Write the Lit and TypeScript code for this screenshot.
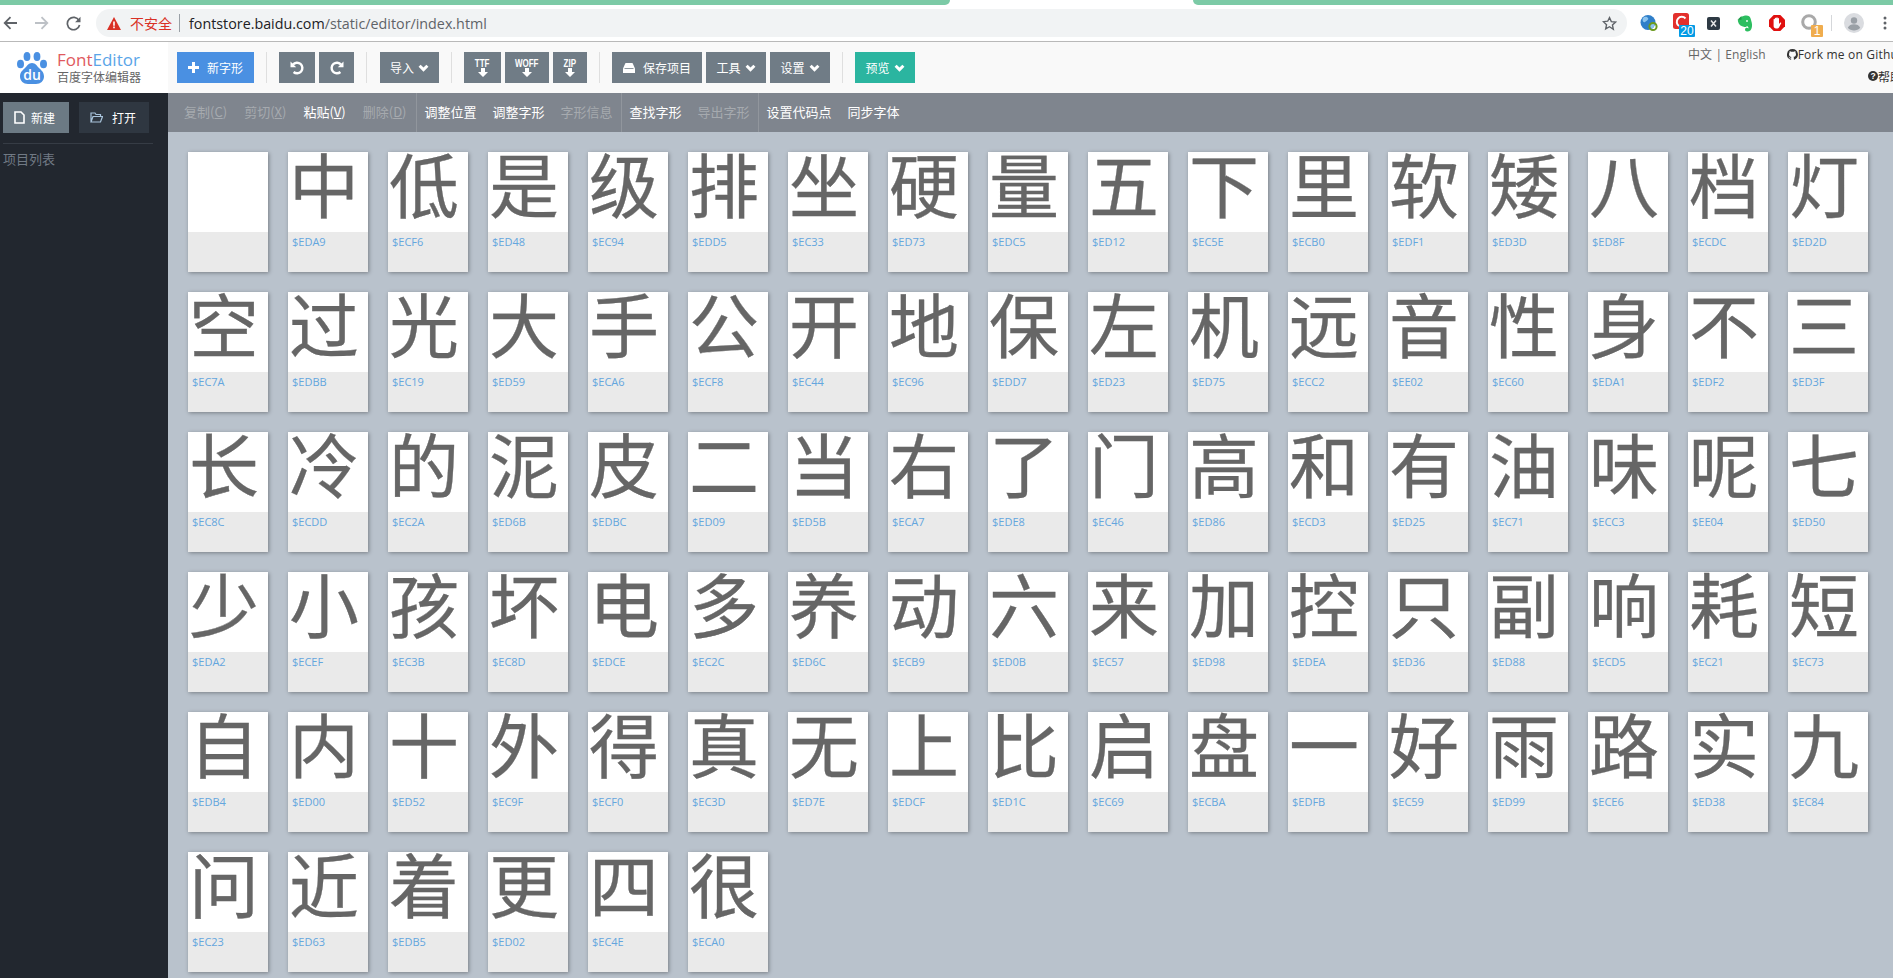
import { LitElement, css, html, svg } from "lit";
import { customElement } from "lit/decorators.js";

const GLYPHS = [
  "中EDA9 低ECF6 是ED48 级EC94 排EDD5 坐EC33 硬ED73 量EDC5 五ED12 下EC5E 里ECB0 软EDF1 矮ED3D 八ED8F 档ECDC 灯ED2D",
  "空EC7A 过EDBB 光EC19 大ED59 手ECA6 公ECF8 开EC44 地EC96 保EDD7 左ED23 机ED75 远ECC2 音EE02 性EC60 身EDA1 不EDF2 三ED3F",
  "长EC8C 冷ECDD 的EC2A 泥ED6B 皮EDBC 二ED09 当ED5B 右ECA7 了EDE8 门EC46 高ED86 和ECD3 有ED25 油EC71 味ECC3 呢EE04 七ED50",
  "少EDA2 小ECEF 孩EC3B 坏EC8D 电EDCE 多EC2C 养ED6C 动ECB9 六ED0B 来EC57 加ED98 控EDEA 只ED36 副ED88 响ECD5 耗EC21 短EC73",
  "自EDB4 内ED00 十ED52 外EC9F 得ECF0 真EC3D 无ED7E 上EDCF 比ED1C 启EC69 盘ECBA 一EDFB 好EC59 雨ED99 路ECE6 实ED38 九EC84",
  "问EC23 近ED63 着EDB5 更ED02 四EC4E 很ECA0",
]
  .join(" ")
  .split(" ")
  .map((s) => ({ ch: s[0], code: "$" + s.slice(1) }));

const chevron = html`<svg class="chev" width="11" height="8" viewBox="0 0 11 8"><path d="M1.6 1.8 5.5 5.6 9.4 1.8" fill="none" stroke="#fff" stroke-width="3"/></svg>`;
const downArrow = html`<svg class="down" width="10" height="9" viewBox="0 0 10 9"><path d="M3 0h4v4h3L5 9 0 4h3z" fill="#fff"/></svg>`;

@customElement("app-root")
export class AppRoot extends LitElement {
  static styles = css`
    :host {
      display: block;
      width: 100%;
      height: 100vh;
      overflow: hidden;
      background: #b9c2cc;
      font-family: "Noto Sans CJK SC", "Open Sans", sans-serif;
      font-size: 12px;
    }

    /* browser chrome */
    .tabs {
      display: flex;
      height: 5px;
      background: #fff;
    }
    .tab-l, .tab-r {
      background: #7ccaa6;
    }
    .tab-l {
      width: 950px;
      border-bottom-right-radius: 5px;
    }
    .tab-r {
      flex: 1;
      margin-left: 243px;
      border-bottom-left-radius: 5px;
    }
    .chrome {
      display: flex;
      align-items: center;
      height: 36px;
      background: #fff;
      border-bottom: 1px solid #b9b9b9;
      box-sizing: content-box;
    }
    .nav {
      display: flex;
      align-items: center;
      width: 96px;
      flex: none;
    }
    .nav svg {
      display: block;
    }
    .pill {
      display: flex;
      align-items: center;
      width: 1531px;
      height: 28px;
      flex: none;
      border-radius: 14px;
      background: #f1f3f4;
      box-sizing: border-box;
      padding-left: 11px;
      font-family: "Open Sans", "Noto Sans CJK SC", sans-serif;
    }
    .unsafe {
      margin-left: 9px;
      color: #d93025;
      font-size: 14px;
      font-family: "Noto Sans CJK SC", sans-serif;
      line-height: 20px;
    }
    .pill-sep {
      width: 1px;
      height: 18px;
      margin: 0 9px 0 7px;
      background: #9aa0a6;
    }
    .url {
      font-size: 14.3px;
      color: #5f6368;
      white-space: nowrap;
    }
    .url b {
      font-weight: 400;
      color: #202124;
    }
    .star {
      margin-left: auto;
      margin-right: 10px;
      display: block;
    }
    .exts {
      display: flex;
      margin-left: 6px;
    }
    .ext {
      position: relative;
      display: flex;
      align-items: center;
      justify-content: center;
      width: 32px;
      height: 36px;
    }
    .badge {
      position: absolute;
      top: 20px;
      height: 12px;
      border-radius: 1px;
      color: #fff;
      font: 12px/12px "Liberation Sans", sans-serif;
      text-align: center;
    }
    .badge.blue {
      left: 14px;
      width: 16px;
      background: #039be5;
    }
    .badge.orange {
      left: 18px;
      width: 12px;
      background: #f0ad4e;
    }
    .chrome-sep {
      width: 1px;
      height: 16px;
      margin: 0 12px 0 6px;
      background: #d5d7da;
    }
    .dots {
      margin-left: 19px;
      display: block;
    }

    /* app header */
    .header {
      display: flex;
      align-items: center;
      height: 51px;
      background: #f9f9f9;
    }
    .logo {
      display: flex;
      align-items: center;
      flex: none;
      width: 168px;
      height: 100%;
      box-sizing: border-box;
      padding-left: 17px;
      background: #fff;
    }
    .logo-text {
      margin-left: 10px;
    }
    .logo-title {
      font: 17px/17px "Open Sans", sans-serif;
      color: #5aa5e8;
    }
    .logo-title span {
      color: #e0595e;
    }
    .logo-sub {
      font-size: 12px;
      line-height: 17px;
      color: #666;
    }
    .bar {
      display: flex;
      align-items: center;
      margin-left: 9px;
    }
    .group {
      display: flex;
      gap: 4px;
    }
    .sep {
      width: 1px;
      height: 31px;
      margin: 0 12px;
      background: #dfdfdf;
    }
    .btn {
      display: flex;
      align-items: center;
      justify-content: center;
      height: 31px;
      padding: 0 11px;
      background: #707c86;
      color: #fff;
      white-space: nowrap;
    }
    .btn.blue {
      background: #4a90e2;
    }
    .btn.teal {
      background: #2bb5a0;
    }
    .btn.menu {
      padding: 0 10.5px;
    }
    .btn.redo {
      padding: 0 10.5px;
    }
    .btn.import {
      margin-left: 1px;
      padding: 0 10px;
    }
    .btn svg {
      display: block;
      flex: none;
    }
    .plus {
      margin-right: 8px;
    }
    .hdd {
      margin-right: 8px;
    }
    .chev {
      margin-left: 4px;
    }
    .dl {
      flex-direction: column;
      padding: 0;
      font: bold 10px/9px "Liberation Sans", sans-serif;
    }
    .dl span {
      display: block;
      transform: scaleX(0.8);
    }
    .w-ttf { width: 37px; }
    .w-woff { width: 44px; }
    .w-zip { width: 34px; }
    .links {
      flex: none;
      width: 205px;
      margin-left: auto;
      align-self: flex-start;
      overflow: hidden;
      white-space: nowrap;
      color: #666;
    }
    .links-top {
      display: flex;
      align-items: center;
      height: 24px;
      font-family: "Open Sans", "Noto Sans CJK SC", sans-serif;
    }
    .lang {
      letter-spacing: 0.1px;
    }
    .lang a {
      color: #666;
    }
    .fork {
      display: flex;
      align-items: center;
      margin-left: 21px;
      color: #333;
      letter-spacing: 0.2px;
    }
    .help {
      display: flex;
      align-items: center;
      height: 20px;
      margin-left: 180px;
      color: #333;
    }
    .help svg, .fork svg {
      display: block;
      flex: none;
    }

    /* workspace */
    .main {
      display: flex;
      height: calc(100vh - 93px);
    }
    .side {
      flex: none;
      width: 168px;
      box-sizing: border-box;
      padding: 9px 15px 0 3px;
      background: #22272f;
    }
    .side-btns {
      display: flex;
      gap: 10px;
      padding-bottom: 10px;
      border-bottom: 1px solid #363c45;
    }
    .side-btn {
      display: flex;
      align-items: center;
      height: 31px;
      box-sizing: border-box;
      color: #fff;
      background: #2f3741;
      width: 70px;
      padding-left: 11px;
    }
    .side-btn svg {
      display: block;
      margin-right: 9px;
    }
    .side-btn.on {
      width: 66px;
      background: #6c7a84;
    }
    .side-btn.on svg {
      margin-right: 6px;
    }
    .side-title {
      margin-top: 5px;
      font-size: 13px;
      line-height: 20px;
      color: #717a85;
    }
    .content {
      flex: 1;
      min-width: 0;
    }
    .tools {
      display: flex;
      height: 39px;
      padding-left: 8px;
      background: #7f858e;
      font-size: 13px;
      line-height: 37px;
      color: #fff;
    }
    .tool {
      padding: 0 8px;
      white-space: nowrap;
    }
    .tool.key {
      padding-right: 9px;
    }
    .tool.off {
      color: #a6aaaf;
    }
    .tool-sep {
      width: 1px;
      background: #91969d;
    }
    .list {
      display: grid;
      grid-template-columns: repeat(17, 80px);
      gap: 20px;
      padding: 20px 0 0 20px;
    }
    .card {
      width: 80px;
      height: 120px;
      background: #eaeaea;
      box-shadow: 1px 1px 4px rgba(0, 0, 0, 0.35);
    }
    .glyph {
      width: 80px;
      height: 80px;
      background: #fff;
      color: #666;
      font-size: 70px;
      line-height: 62px;
      padding-left: 1px;
      box-sizing: border-box;
      -webkit-text-stroke: 0.3px #666;
    }
    .code {
      padding-left: 4px;
      font: 11px/20px "Open Sans", sans-serif;
      color: #64a6de;
    }
  `;

  renderChrome() {
    return html`
      <div class="tabs"><div class="tab-l"></div><div class="tab-r"></div></div>
      <div class="chrome">
        <div class="nav">
          <svg style="margin-left:3px" width="14" height="14" viewBox="0 0 14 14"><path d="M14 7H2M7.5 1.2 1.7 7l5.8 5.8" fill="none" stroke="#5f6368" stroke-width="1.8"/></svg>
          <svg style="margin-left:18px" width="14" height="14" viewBox="0 0 14 14"><path d="M0 7h12M6.5 1.2 12.3 7l-5.8 5.8" fill="none" stroke="#bdc1c6" stroke-width="1.8"/></svg>
          <svg style="margin-left:17px" width="15" height="15" viewBox="0 0 15 15"><path d="M13 4.5A6.2 6.2 0 1 0 13.6 9" fill="none" stroke="#5f6368" stroke-width="1.7"/><path d="M14.5 0.8v5.4H9.1z" fill="#5f6368"/></svg>
        </div>
        <div class="pill">
          <svg width="14" height="13" viewBox="0 0 14 13"><path d="M7 0 14 13H0z" fill="#d93025"/><path d="M6.2 4.5h1.6v4.2H6.2zM6.2 9.6h1.6v1.6H6.2z" fill="#fff"/></svg>
          <span class="unsafe">不安全</span>
          <span class="pill-sep"></span>
          <span class="url"><b>fontstore.baidu.com</b>/static/editor/index.html</span>
          <svg class="star" width="15" height="15" viewBox="0 0 24 24"><path d="M12 2.6l2.9 6.3 6.9.8-5.1 4.7 1.4 6.8L12 17.2l-6.1 3.4 1.4-6.8-5.1-4.7 6.9-.8z" fill="none" stroke="#5f6368" stroke-width="2.2"/></svg>
        </div>
        <div class="exts">
          <div class="ext">
            <svg width="18" height="18" viewBox="0 0 18 18"><circle cx="8" cy="8.5" r="7.5" fill="#2f7fc9"/><path d="M3 4c2-2 4-1 5 0s-1 3-3 4-3-2-2-4zM10 10l3-2 2 3-3 4-2-2z" fill="#8cc4ee"/><circle cx="13" cy="12.5" r="3.6" fill="none" stroke="#6c9a1f" stroke-width="2"/></svg>
          </div>
          <div class="ext">
            <svg style="margin:-4px 0 0 -1px" width="16" height="16" viewBox="0 0 16 16"><rect width="16" height="16" rx="2.5" fill="#e3302c"/><path d="M12.5 5.5A5 5 0 1 0 6 13" fill="none" stroke="#fff" stroke-width="2"/></svg>
            <span class="badge blue">20</span>
          </div>
          <div class="ext">
            <svg width="13" height="13" viewBox="0 0 13 13"><rect width="13" height="13" rx="2" fill="#2e3a44"/><path d="M4 3.5 9 9.5M9 3.5 4 9.5" stroke="#e6e6e6" stroke-width="1.5"/></svg>
          </div>
          <div class="ext">
            <svg width="16" height="17" viewBox="0 0 16 17"><path d="M5 1.500 8 .5c3-.5 5 .5 5.600 3 .8 3 1.900 5.500 1.300 8.500-.5 3-2.200 4.500-4.600 4.500-1.800 0-2.600-1.300-2.200-2.500.4-1.300 2.300-1.500 3.300-.6.300-1-.4-2-1.400-2.400-.5 1-1.500 1.200-2.500 1C4 11.500 1.500 9.500 1 6.500L.8 5.200z" fill="#2dbe60"/><path d="M0.500 4.700 4.500 1v3.700z" fill="#1f9a49"/><circle cx="10" cy="6" r="0.900" fill="#fff"/></svg>
          </div>
          <div class="ext">
            <svg width="16" height="16" viewBox="0 0 16 16"><path d="M4.7 0h6.6L16 4.7v6.6L11.3 16H4.7L0 11.3V4.7z" fill="#e0100f"/><path d="M4.6 8V4.6c0-1 1.3-1 1.3 0V3.4c0-1 1.4-1 1.4 0v-.5c0-1 1.4-1 1.4 0v.8c0-1 1.3-1 1.3 0V9l1-1.2c.8-.7 1.600 0 1.100.8L10 12.600c-.4.600-1 .8-1.700.8H7c-1.400 0-2.400-1-2.400-2.400z" fill="#fff"/></svg>
          </div>
          <div class="ext">
            <svg style="margin:-2px 0 0 -1px" width="16" height="16" viewBox="0 0 16 16"><circle cx="8" cy="8" r="6.300" fill="none" stroke="#a9a9a9" stroke-width="3"/></svg>
            <span class="badge orange">1</span>
          </div>
        </div>
        <div class="chrome-sep"></div>
        <svg width="20" height="20" viewBox="0 0 20 20" style="display:block"><circle cx="10" cy="10" r="10" fill="#dadce0"/><circle cx="10" cy="7.500" r="3.200" fill="#9aa0a6"/><path d="M3.800 14.800c1-2.600 3.500-3.600 6.200-3.600s5.200 1 6.200 3.600c-1.500 1.700-3.700 2.700-6.200 2.700s-4.700-1-6.200-2.700z" fill="#9aa0a6"/></svg>
        <svg class="dots" width="4" height="14" viewBox="0 0 4 14"><circle cx="2" cy="2" r="1.500" fill="#5f6368"/><circle cx="2" cy="7" r="1.500" fill="#5f6368"/><circle cx="2" cy="12" r="1.500" fill="#5f6368"/></svg>
      </div>
    `;
  }

  renderHeader() {
    return html`
      <div class="header">
        <div class="logo">
          <svg width="30" height="32" viewBox="0 0 30 32">
            <ellipse cx="10" cy="4.500" rx="3.400" ry="4.500" fill="#4a90e2"/>
            <ellipse cx="20" cy="4.500" rx="3.400" ry="4.500" fill="#4a90e2"/>
            <ellipse cx="3.500" cy="12" rx="3.500" ry="4.300" fill="#4a90e2"/>
            <ellipse cx="26.500" cy="12" rx="3.500" ry="4.300" fill="#4a90e2"/>
            <path d="M15 11c3.500 0 5 3 7 5s5 4 5 8.500-3.500 7.500-8 7.500h-8c-4.500 0-8-3-8-7.500S6 18 8 16s3.500-5 7-5z" fill="#4a90e2"/>
            ${svg`<text x="15" y="28" text-anchor="middle" fill="#fff" font-family="Open Sans, sans-serif" font-size="14" font-weight="600">du</text>`}
          </svg>
          <div class="logo-text">
            <div class="logo-title"><span>Font</span>Editor</div>
            <div class="logo-sub">百度字体编辑器</div>
          </div>
        </div>
        <div class="bar">
          <div class="btn blue">
            <svg class="plus" width="11" height="11" viewBox="0 0 11 11"><path d="M4 0h3v4h4v3H7v4H4V7H0V4h4z" fill="#fff"/></svg>
            <span>新字形</span>
          </div>
          <div class="sep"></div>
          <div class="group">
            <div class="btn">
              <svg width="14" height="14" viewBox="0 0 14 14"><path d="M3 3.600A5.300 5.300 0 1 1 3.600 11" fill="none" stroke="#fff" stroke-width="2.400"/><path d="M0.500 0.500v5.700h5.700z" fill="#fff"/></svg>
            </div>
            <div class="btn redo">
              <svg width="14" height="14" viewBox="0 0 14 14"><path d="M11 3.600A5.300 5.300 0 1 0 10.400 11" fill="none" stroke="#fff" stroke-width="2.400"/><path d="M13.500 0.500v5.700H7.800z" fill="#fff"/></svg>
            </div>
          </div>
          <div class="sep"></div>
          <div class="btn import"><span>导入</span>${chevron}</div>
          <div class="sep"></div>
          <div class="group">
            <div class="btn dl w-ttf"><span>TTF</span>${downArrow}</div>
            <div class="btn dl w-woff"><span>WOFF</span>${downArrow}</div>
            <div class="btn dl w-zip"><span>ZIP</span>${downArrow}</div>
          </div>
          <div class="sep"></div>
          <div class="group">
            <div class="btn">
              <svg class="hdd" width="12" height="10" viewBox="0 0 12 10"><path d="M2.500 0h7L12 5.500V10H0V5.500z" fill="#fff"/><path d="M1.500 5.500h9" stroke="#707c86" stroke-width="0.800"/></svg>
              <span>保存项目</span>
            </div>
            <div class="btn menu"><span>工具</span>${chevron}</div>
            <div class="btn menu"><span>设置</span>${chevron}</div>
          </div>
          <div class="sep"></div>
          <div class="btn teal menu"><span>预览</span>${chevron}</div>
        </div>
        <div class="links">
          <div class="links-top">
            <span class="lang">中文 | <a>English</a></span>
            <span class="fork">
              <svg width="11" height="11" viewBox="0 0 16 16"><path fill="#333" d="M8 0a8 8 0 0 0-2.500 15.600c.4.100.5-.200.500-.400v-1.400c-2.200.500-2.700-1-2.700-1-.400-.900-.900-1.200-.900-1.200-.700-.500.100-.500.100-.500.800.100 1.200.800 1.200.800.700 1.200 1.900.900 2.300.700.100-.500.300-.900.500-1.100-1.800-.200-3.600-.900-3.600-4 0-.900.300-1.600.800-2.100-.100-.200-.400-1 .100-2.100 0 0 .700-.200 2.200.800a7.500 7.500 0 0 1 4 0c1.500-1 2.200-.800 2.200-.800.400 1.100.200 1.900.100 2.100.500.600.800 1.300.800 2.100 0 3.100-1.900 3.700-3.700 3.900.300.300.600.800.600 1.500v2.200c0 .200.100.500.600.400A8 8 0 0 0 8 0z"/></svg>
              <span>Fork me on Github</span>
            </span>
          </div>
          <div class="help">
            <svg width="10" height="10" viewBox="0 0 10 10"><circle cx="5" cy="5" r="5" fill="#333"/>${svg`<text x="5" y="8.200" text-anchor="middle" fill="#fff" font-family="Liberation Sans" font-size="8.500" font-weight="700">?</text>`}</svg>
            <span>帮助</span>
          </div>
        </div>
      </div>
    `;
  }

  renderSide() {
    return html`
      <div class="side">
        <div class="side-btns">
          <div class="side-btn on">
            <svg width="11" height="13" viewBox="0 0 11 13"><path d="M1 1h6l3 3v8H1z" fill="none" stroke="#fff" stroke-width="1.600"/></svg>
            <span>新建</span>
          </div>
          <div class="side-btn">
            <svg width="13" height="11" viewBox="0 0 13 11"><path d="M1 10V1h4l1 1.500h4.500V4.500M1 10l2-5.500h9.500L10.500 10z" fill="none" stroke="#a9c4dc" stroke-width="1.200"/></svg>
            <span>打开</span>
          </div>
        </div>
        <div class="side-title">项目列表</div>
      </div>
    `;
  }

  renderTools() {
    const tool = (label: unknown, off = false) =>
      html`<span class="tool ${off ? "off" : ""}">${label}</span>`;
    const keyTool = (name: string, key: string, off = false) =>
      html`<span class="tool key ${off ? "off" : ""}">${name}(<u>${key}</u>)</span>`;
    return html`
      <div class="tools">
        ${keyTool("复制", "C", true)}
        ${keyTool("剪切", "X", true)}
        ${keyTool("粘贴", "V")}
        ${keyTool("删除", "D", true)}
        <span class="tool-sep"></span>
        ${tool("调整位置")}
        ${tool("调整字形")}
        ${tool("字形信息", true)}
        <span class="tool-sep"></span>
        ${tool("查找字形")}
        ${tool("导出字形", true)}
        <span class="tool-sep"></span>
        ${tool("设置代码点")}
        ${tool("同步字体")}
      </div>
    `;
  }

  render() {
    return html`
      ${this.renderChrome()}
      ${this.renderHeader()}
      <div class="main">
        ${this.renderSide()}
        <div class="content">
          ${this.renderTools()}
          <div class="list">
            <div class="card"><div class="glyph"></div></div>
            ${GLYPHS.map(
              (g) => html`
                <div class="card">
                  <div class="glyph">${g.ch}</div>
                  <div class="code">${g.code}</div>
                </div>
              `
            )}
          </div>
        </div>
      </div>
    `;
  }
}
